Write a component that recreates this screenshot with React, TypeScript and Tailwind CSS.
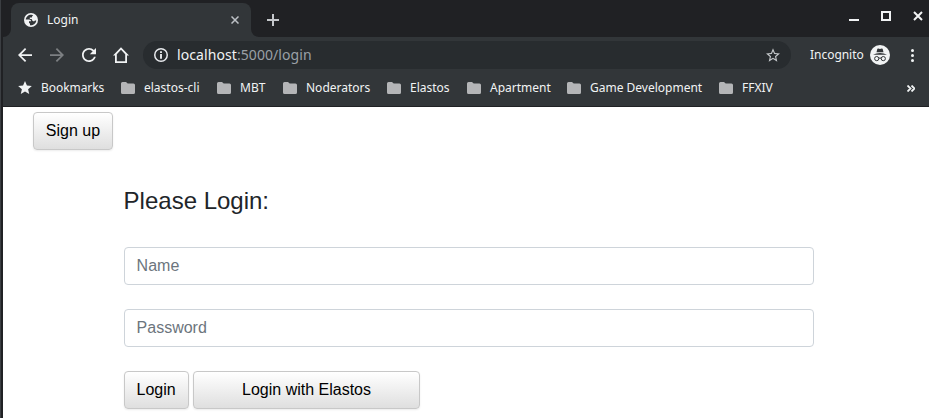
import React from "react";

const bookmarks = [
  { name: "elastos-cli", width: "w-24" },
  { name: "MBT", width: "w-[66px]" },
  { name: "Noderators", width: "w-[104px]" },
  { name: "Elastos", width: "w-20" },
  { name: "Apartment", width: "w-[100px]" },
  { name: "Game Development", width: "w-[152px]" },
  { name: "FFXIV", width: "w-[60px]" },
];

const chromeFont = "font-['Noto_Sans',sans-serif]";
const buttonStyle =
  "h-[38px] shrink-0 rounded-[4px] border border-[#c8c8c8] bg-linear-to-b from-white to-[#dfdfdf] text-base leading-6 text-black shadow-[0_1px_2px_rgba(0,0,0,0.08)]";
const inputStyle =
  "block h-[38px] w-[690px] rounded-[4px] border border-[#ced4da] bg-white px-3 text-base text-[#495057] outline-none placeholder:text-[#6c757d] placeholder:opacity-100";

function TabStrip() {
  return (
    <div className="flex h-[37px] items-end bg-[#202124]">
      <svg className="h-2 w-2 shrink-0" viewBox="0 0 8 8">
        <path d="M8 0A8 8 0 0 1 0 8H8Z" fill="#323639" />
      </svg>
      <div className="flex h-[34px] w-60 shrink-0 items-center rounded-t-lg bg-[#323639] pl-[13px] pr-3">
        <svg className="size-[14px]" viewBox="0 0 14 14">
          <circle cx="7" cy="7" r="7" fill="#f1f3f4" />
          <path
            d="M7.6 1.7C4.6 1.4 2 3.6 1.7 6.6L5.2 6.6C6.3 6.7 7 7.3 7.1 8.3H5V10L6 10.5V12.3C9.2 12.6 12 10.4 12.3 7.4H10.9C10.5 8.3 9.6 8.6 8.8 8.1C8 7.6 8.3 6.5 7.5 6H5.8V4.6H7.3C8 4.6 8.2 4 8.1 3.3L9.2 2.2C8.7 1.9 8.2 1.8 7.6 1.7Z"
            fill="#323639"
          />
        </svg>
        <span className="ml-[9px] grow text-xs leading-4 text-[#f1f3f4]">Login</span>
        <svg className="size-2" viewBox="0 0 8 8" fill="none" stroke="#bdc1c6" strokeWidth="1.5">
          <path d="m.5.5 7 7m0-7-7 7" />
        </svg>
      </div>
      <svg className="h-2 w-2 shrink-0" viewBox="0 0 8 8">
        <path d="M0 0A8 8 0 0 0 8 8H0Z" fill="#323639" />
      </svg>
      <svg className="mb-[11px] ml-2 size-3" viewBox="0 0 12 12" stroke="#c5c8cb" strokeWidth="2">
        <path d="M6 0v12M0 6h12" />
      </svg>
      <div className="mb-4 ml-auto mr-[6px] flex items-end gap-[22px]">
        <span className="h-[2px] w-[10px] bg-[#f1f3f4]" />
        <span className="size-[10px] border-2 border-[#f1f3f4]" />
        <svg className="size-[10px]" viewBox="0 0 10 10" stroke="#f1f3f4" strokeWidth="2">
          <path d="m1 1 8 8m0-8-8 8" />
        </svg>
      </div>
    </div>
  );
}

function IncognitoIcon() {
  return (
    <svg className="ml-[6px] size-5" viewBox="0 0 20 20">
      <circle cx="10" cy="10" r="10" fill="#f1f3f4" />
      <path
        d="M6.5 7.3 7.3 4.1c.1-.5.5-.7 1-.5l1.7.4 1.7-.4c.5-.2.9 0 1 .5l.8 3.2ZM3 9.8Q6 8 10 8t7 1.8Z"
        fill="#323639"
      />
      <g fill="none" stroke="#323639" strokeWidth="1">
        <circle cx="6.7" cy="13.6" r="2.1" />
        <circle cx="13.3" cy="13.6" r="2.1" />
        <path d="M8.8 13.3q1.2-.7 2.4 0" />
      </g>
    </svg>
  );
}

function Toolbar() {
  return (
    <div className="flex h-9 items-center bg-[#323639] pl-[15px] pr-[15px]">
      <svg className="size-[14px] shrink-0" viewBox="4 4 16 16" fill="#f1f3f4">
        <path d="M20 11H7.83l5.59-5.59L12 4l-8 8 8 8 1.41-1.41L7.83 13H20z" />
      </svg>
      <svg className="ml-[18px] size-[14px] shrink-0" viewBox="4 4 16 16" fill="#7d8083">
        <path d="m12 4-1.41 1.41L16.17 11H4v2h12.17l-5.58 5.59L12 20l8-8z" />
      </svg>
      <svg className="ml-[18px] size-[14px] shrink-0" viewBox="4 4 16 16" fill="#f1f3f4">
        <path d="M17.65 6.35C16.2 4.9 14.21 4 12 4c-4.42 0-7.99 3.58-7.99 8s3.57 8 7.99 8c3.73 0 6.84-2.55 7.73-6h-2.08c-.82 2.33-3.04 4-5.65 4-3.31 0-6-2.69-6-6s2.69-6 6-6c1.66 0 3.14.69 4.22 1.78L13 11h7V4z" />
      </svg>
      <svg className="ml-[17px] size-4 shrink-0" viewBox="0 0 16 16" fill="#f1f3f4">
        <path fillRule="evenodd" d="M8 .3 0 8.6h2V16h12V8.6h2zM8 2.8l4.2 4.4v7H3.8v-7z" />
      </svg>
      <div className="ml-[14px] flex h-7 w-[648px] shrink-0 items-center rounded-full bg-[#282c2f] pl-[11px] pr-[11px]">
        <svg className="size-[14px]" viewBox="0 0 14 14" fill="none" stroke="#e8eaed">
          <circle cx="7" cy="7" r="6.25" strokeWidth="1.5" />
          <path d="M7 3.3v1.6M7 6v4.7" strokeWidth="1.9" />
        </svg>
        <span className="ml-[9px] grow text-sm leading-5 tracking-[0.08px] text-[#9aa0a6]">
          <span className="text-[#f1f3f4]">localhost</span>:5000/login
        </span>
        <svg className="size-[14px]" viewBox="2 2 20 19" fill="#c5c8cb">
          <path d="m22 9.24-7.19-.62L12 2 9.19 8.63 2 9.24l5.46 4.73L5.82 21 12 17.27 18.18 21l-1.63-7.03zM12 15.4l-3.76 2.27 1-4.28-3.32-2.88 4.38-.38L12 6.1l1.71 4.04 4.38.38-3.32 2.88 1 4.28z" />
        </svg>
      </div>
      <span className="ml-[19px] text-xs leading-4 tracking-[-0.03px] text-[#f1f3f4]">Incognito</span>
      <IncognitoIcon />
      <svg className="ml-auto h-[13px] w-[3px]" viewBox="0 0 3 13" fill="#f1f3f4">
        <circle cx="1.5" cy="1.5" r="1.5" />
        <circle cx="1.5" cy="6.5" r="1.5" />
        <circle cx="1.5" cy="11.5" r="1.5" />
      </svg>
    </div>
  );
}

function BookmarksBar() {
  return (
    <div className="flex h-[34px] items-center border-b border-[#202124] bg-[#323639] pb-1 pl-[15px] pr-[14px] pt-px text-xs leading-4 text-[#f1f3f4]">
      <div className="flex w-[103px] shrink-0 items-center gap-[9px]">
        <svg className="mb-px h-[13px] w-[14px] shrink-0" viewBox="2 2 20 19" fill="#f1f3f4">
          <path d="M12 17.27 18.18 21l-1.64-7.03L22 9.24l-7.19-.61L12 2 9.19 8.63 2 9.24l5.46 4.73L5.82 21z" />
        </svg>
        <span className="tracking-[-0.06px]">Bookmarks</span>
      </div>
      {bookmarks.map(({ name, width }) => (
        <div key={name} className={`flex shrink-0 items-center gap-[9px] whitespace-nowrap ${width}`}>
          <svg className="h-3 w-[14px] shrink-0" viewBox="0 0 14 12" fill="#b4b5b7">
            <path d="M1.5 0H5l1.7 1.5h5.8A1.5 1.5 0 0 1 14 3v7.5a1.5 1.5 0 0 1-1.5 1.5h-11A1.5 1.5 0 0 1 0 10.5v-9A1.5 1.5 0 0 1 1.5 0Z" />
          </svg>
          <span>{name}</span>
        </div>
      ))}
      <svg className="ml-auto h-[7px] w-2" viewBox="0 0 8 7" fill="none" stroke="#f1f3f4" strokeWidth="1.8">
        <path d="m.5.5 3 3-3 3m4-6 3 3-3 3" />
      </svg>
    </div>
  );
}

export default function App() {
  return (
    <div className="flex h-[418px] w-[929px] overflow-hidden bg-white">
      <div className="w-[3px] shrink-0 border-l border-[#3b3e42] bg-[#202124]" />
      <div className="min-w-0 grow">
        <header className={chromeFont}>
          <TabStrip />
          <Toolbar />
          <BookmarksBar />
        </header>
        <main className="font-['Liberation_Sans',Arial,sans-serif] pl-[30px] pt-[5px]">
          <button className={`${buttonStyle} block w-20`}>Sign up</button>
          <form className="ml-[90.6px] mt-9">
            <h1 className="text-2xl leading-[29px] text-[#212529]">Please Login:</h1>
            <input className={`${inputStyle} mt-8`} placeholder="Name" />
            <input className={`${inputStyle} mt-6`} type="password" placeholder="Password" />
            <div className="mt-6 flex gap-[4.45px]">
              <button type="button" className={`${buttonStyle} w-[65px]`}>Login</button>
              <button type="button" className={`${buttonStyle} w-[227px]`}>Login with Elastos</button>
            </div>
          </form>
        </main>
      </div>
    </div>
  );
}
